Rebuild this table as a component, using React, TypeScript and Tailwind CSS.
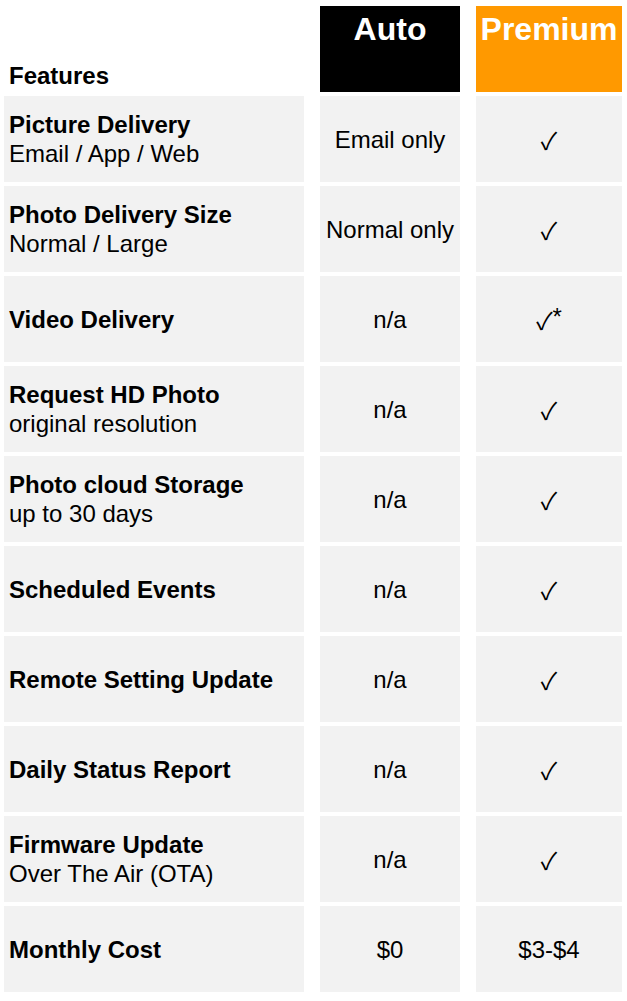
import React from 'react';

interface Row {
  title: string;
  sub?: string;
  auto: string;
  premium?: string;
  star?: boolean;
}

const rows: Row[] = [
  { title: 'Picture Delivery', sub: 'Email / App / Web', auto: 'Email only' },
  { title: 'Photo Delivery Size', sub: 'Normal / Large', auto: 'Normal only' },
  { title: 'Video Delivery', auto: 'n/a', star: true },
  { title: 'Request HD Photo', sub: 'original resolution', auto: 'n/a' },
  { title: 'Photo cloud Storage', sub: 'up to 30 days', auto: 'n/a' },
  { title: 'Scheduled Events', auto: 'n/a' },
  { title: 'Remote Setting Update', auto: 'n/a' },
  { title: 'Daily Status Report', auto: 'n/a' },
  { title: 'Firmware Update', sub: 'Over The Air (OTA)', auto: 'n/a' },
  { title: 'Monthly Cost', auto: '$0', premium: '$3-$4' },
];

export default function App() {
  return (
    <div
      className="bg-white text-black pl-[4px] pt-[6px] flex flex-col gap-[4px] text-[24px] leading-[1.2]"
      style={{ fontFamily: '"Liberation Sans", Arial, "DejaVu Sans", sans-serif' }}
    >
      {/* header */}
      <div className="flex gap-[16px] h-[86px]">
        <div className="w-[300px] flex items-end pl-[5px] pb-[1px] font-bold">Features</div>
        <div className="w-[140px] bg-black text-white text-[32px] font-bold text-center pt-[4px]">Auto</div>
        <div className="w-[146px] bg-[#ff9900] text-white text-[32px] font-bold text-center pt-[4px]">Premium</div>
      </div>

      {rows.map((r) => (
        <div key={r.title} className="flex gap-[16px] h-[86px]">
          <div className="w-[300px] bg-[#f2f2f2] flex flex-col justify-center pl-[5px] pt-[2px]">
            <div className="font-bold">{r.title}</div>
            {r.sub && <div>{r.sub}</div>}
          </div>
          <div className="w-[140px] bg-[#f2f2f2] flex items-center justify-center pt-[2px]">{r.auto}</div>
          <div className="w-[146px] bg-[#f2f2f2] flex items-center justify-center pt-[2px]">
            {r.premium ? (
              r.premium
            ) : (
              <span className="flex items-start">
                <span
                  className="text-[24px] leading-none"
                  style={{ fontFamily: '"Noto Sans CJK JP", "DejaVu Sans", sans-serif' }}
                >
                  ✓
                </span>
                {r.star && <span className="leading-none -mt-[3px]">*</span>}
              </span>
            )}
          </div>
        </div>
      ))}
    </div>
  );
}
